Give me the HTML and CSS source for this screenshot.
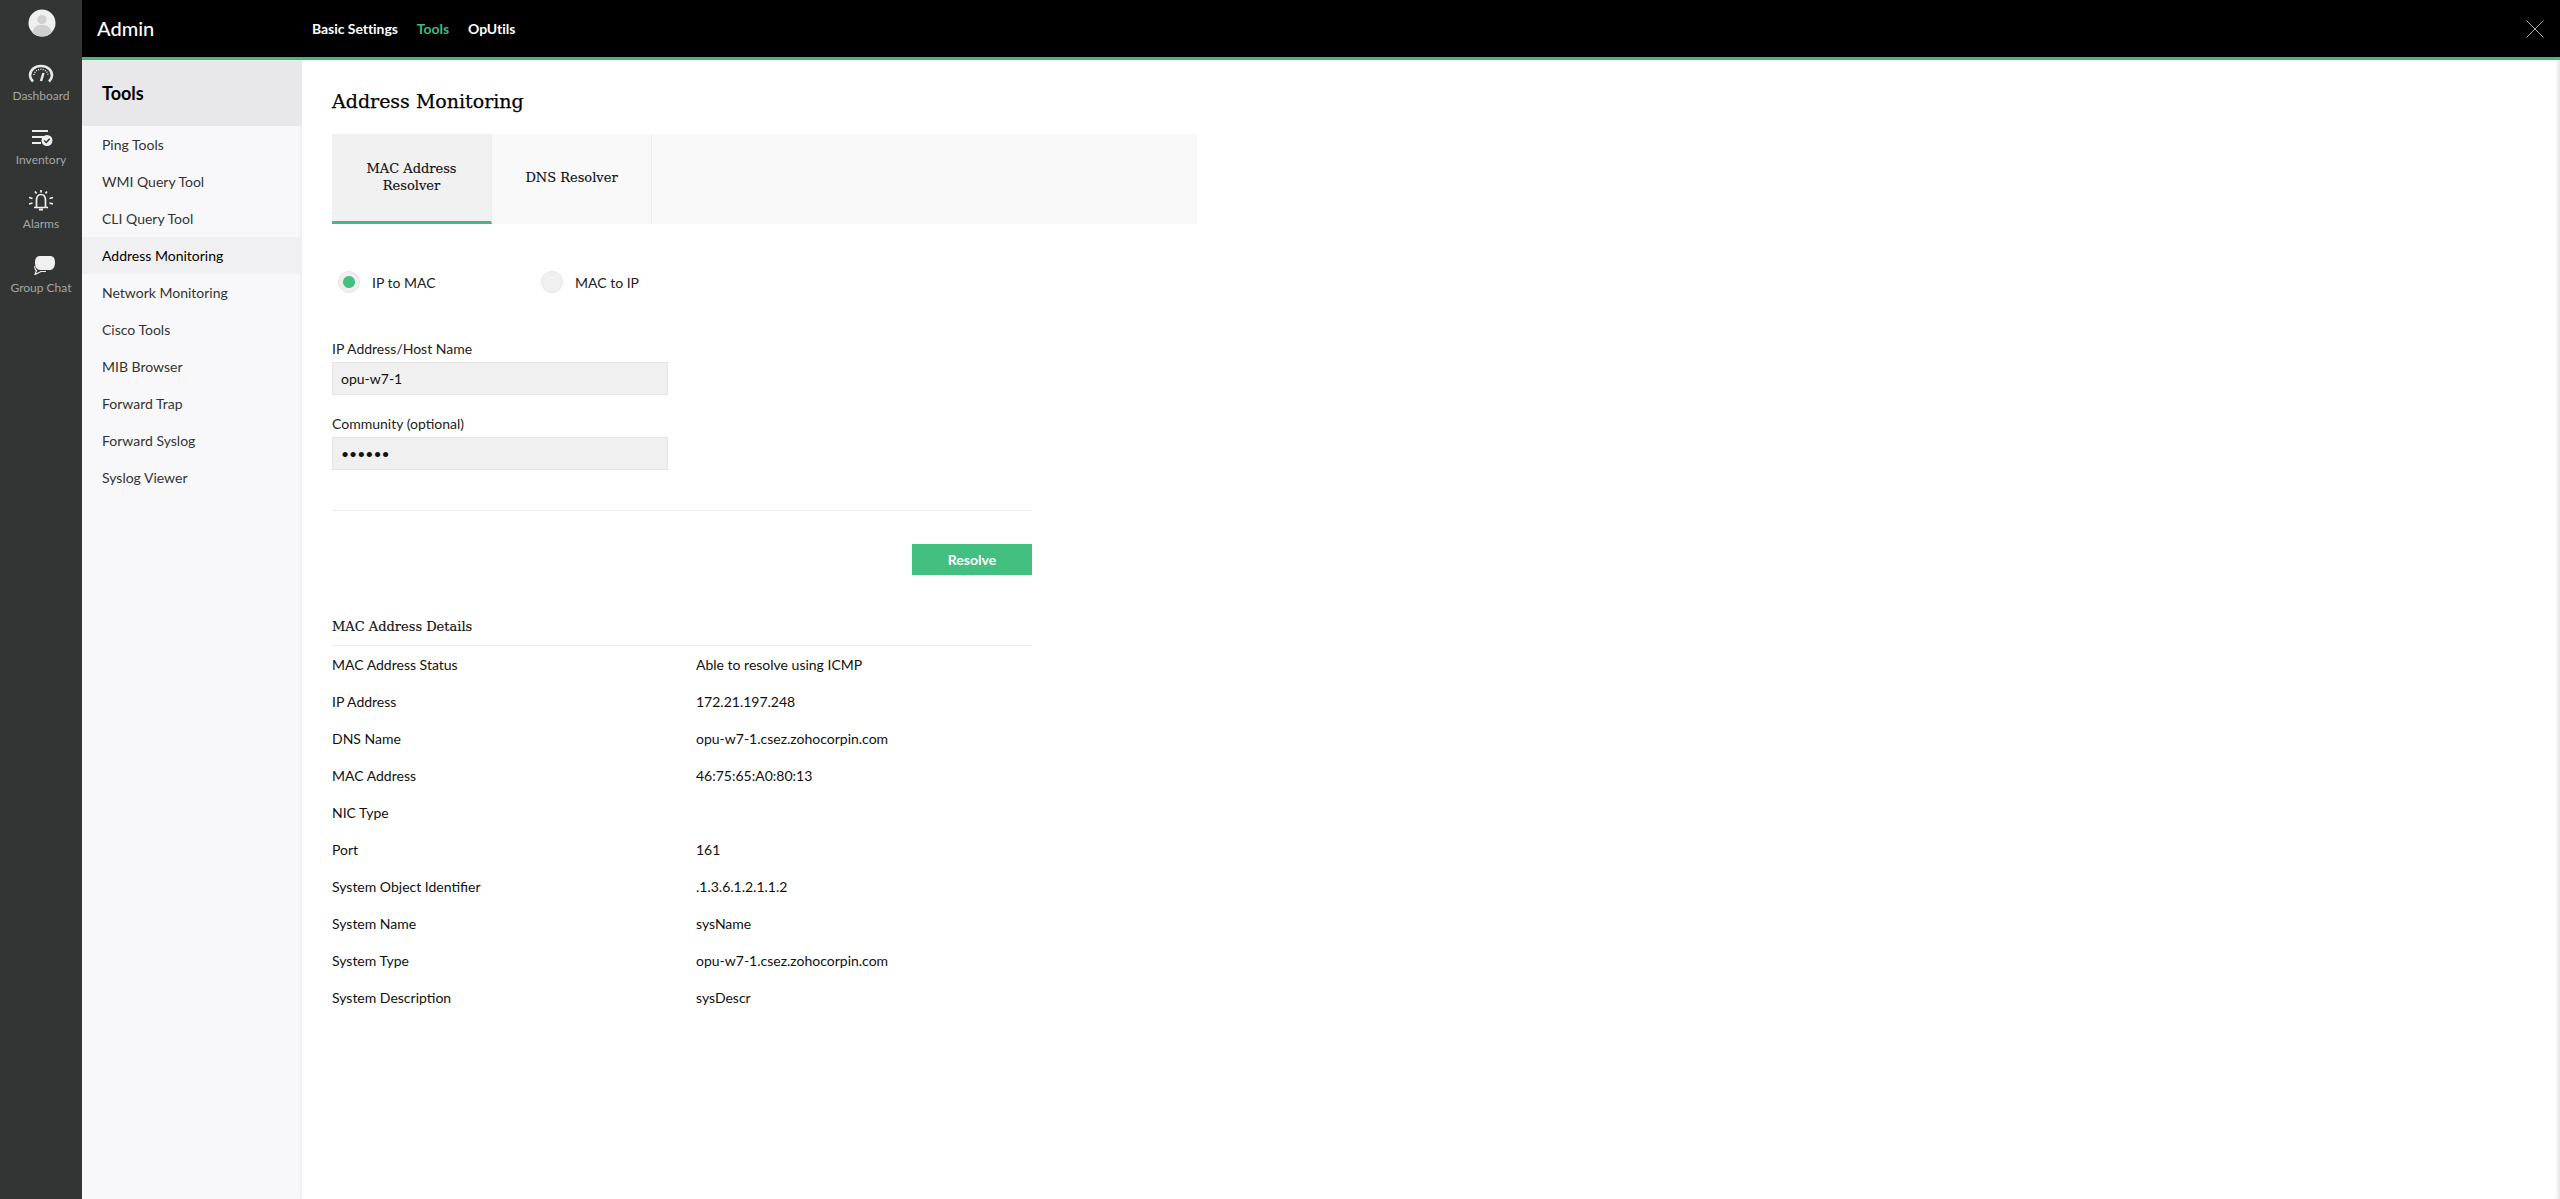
FILE: index.html
```html
<!DOCTYPE html>
<html lang="en">
<head>
<meta charset="utf-8">
<title>Address Monitoring</title>
<link rel="stylesheet" href="styles.css">
</head>
<body>
<div class="app">
  <nav class="rail">
    <div class="avatar">
      <svg viewBox="0 0 28 28" width="28" height="28"><circle cx="14" cy="14" r="13.5" fill="#efefef"/><circle cx="14" cy="10.5" r="4.6" fill="#cfcfcf"/><path d="M4.500 24c.6-5.500 4-8.200 9.500-8.200s8.900 2.700 9.500 8.200A13.500 13.500 0 0 1 14 27.500 13.500 13.500 0 0 1 4.500 24z" fill="#cfcfcf"/></svg>
    </div>
    <a class="rail-item rail-first">
      <svg class="rail-icon" viewBox="0 0 26 20" width="26" height="20" fill="none" stroke="#e9e9e9"><path d="M5 18.500C3 16.500 2 14.500 2 12.500 2 7 6.500 3 13 3S24 7 24 12.500c0 2-1 4-3 6" stroke-width="2.600"/><path d="M6 12C6.500 8.500 9.500 6.300 13 6.300S19.500 8.500 20 12" stroke-width="1.400" stroke-dasharray="1 1.300"/><path d="M15.500 10l-2.500 8" stroke-width="2.400"/></svg>
      <span>Dashboard</span>
    </a>
    <a class="rail-item">
      <svg class="rail-icon" viewBox="0 0 24 18" width="24" height="18"><path d="M3 2h16M3 8h13M3 14h9" stroke="#eee" stroke-width="2" fill="none"/><circle cx="18" cy="11.500" r="5.500" fill="#eee"/><path d="M15.300 11.500l2 2 3.400-3.800" stroke="#333" stroke-width="1.500" fill="none"/></svg>
      <span>Inventory</span>
    </a>
    <a class="rail-item">
      <svg class="rail-icon" viewBox="0 0 26 22" width="26" height="22" fill="none" stroke="#f0f0f0" stroke-width="1.700"><path d="M8.500 18v-6.500c0-3.500 1.500-6 4.500-6s4.500 2.500 4.500 6V18M6 18.500h14"/><path d="M11 20.500h4" stroke-width="2"/><path d="M13 1v2.500M7 2.500l1.500 2M19 2.500l-1.500 2M1 8.500l3.500 1M25 8.500l-3.500 1M1 15l3.500-1M25 15l-3.500-1"/></svg>
      <span>Alarms</span>
    </a>
    <a class="rail-item">
      <svg class="rail-icon chat" viewBox="0 0 24 20" width="24" height="20"><path d="M8 1h10c3 0 5 2 5 6.500S21 15 18 15H8c-3 0-5-3-5-7.500S5 1 8 1z" fill="#f0f0f0"/><path d="M3 11c-.5 2 0 3.500 1.500 4.500L3 19.500 9 16.500h5" fill="none" stroke="#f0f0f0" stroke-width="1.200"/></svg>
      <span>Group Chat</span>
    </a>
  </nav>
  <div class="main">
    <header class="topbar">
      <div class="brand">Admin</div>
      <ul class="topnav">
        <li>Basic Settings</li>
        <li class="current">Tools</li>
        <li>OpUtils</li>
      </ul>
      <svg class="close" viewBox="0 0 18 18" width="18" height="18"><path d="M.5.500l17 17M17.500.500l-17 17" stroke="#a8a8a8" stroke-width="1" fill="none"/></svg>
    </header>
    <div class="body">
      <aside class="side">
        <h2 class="side-title">Tools</h2>
        <ul class="side-list">
          <li>Ping Tools</li>
          <li>WMI Query Tool</li>
          <li>CLI Query Tool</li>
          <li class="active">Address Monitoring</li>
          <li>Network Monitoring</li>
          <li>Cisco Tools</li>
          <li>MIB Browser</li>
          <li>Forward Trap</li>
          <li>Forward Syslog</li>
          <li>Syslog Viewer</li>
        </ul>
      </aside>
      <main class="content">
        <h1 class="title">Address Monitoring</h1>
        <div class="tabs">
          <div class="tab selected">MAC Address<br>Resolver</div>
          <div class="tab">DNS Resolver</div>
        </div>
        <div class="radios">
          <label class="radio"><input type="radio" name="mode" checked><span>IP to MAC</span></label>
          <label class="radio"><input type="radio" name="mode"><span>MAC to IP</span></label>
        </div>
        <form class="form">
          <label class="field-label" for="host">IP Address/Host Name</label>
          <input class="field" id="host" type="text" value="opu-w7-1">
          <label class="field-label" for="comm">Community (optional)</label>
          <input class="field" id="comm" type="password" value="public">
          <div class="actions"><button class="resolve" type="button">Resolve</button></div>
        </form>
        <section class="details">
          <h3 class="details-title">MAC Address Details</h3>
          <dl class="rows">
            <dt>MAC Address Status</dt><dd>Able to resolve using ICMP</dd>
            <dt>IP Address</dt><dd>172.21.197.248</dd>
            <dt>DNS Name</dt><dd>opu-w7-1.csez.zohocorpin.com</dd>
            <dt>MAC Address</dt><dd>46:75:65:A0:80:13</dd>
            <dt>NIC Type</dt><dd></dd>
            <dt>Port</dt><dd>161</dd>
            <dt>System Object Identifier</dt><dd>.1.3.6.1.2.1.1.2</dd>
            <dt>System Name</dt><dd>sysName</dd>
            <dt>System Type</dt><dd>opu-w7-1.csez.zohocorpin.com</dd>
            <dt>System Description</dt><dd>sysDescr</dd>
          </dl>
        </section>
      </main>
    </div>
  </div>
</div>
</body>
</html>
```
FILE: styles.css
```css
* { box-sizing: border-box; }
html, body { margin: 0; height: 100%; }
body { font-family: Lato, "Open Sans", sans-serif; font-size: 14px; color: #222; background: #fff; overflow: hidden; }
ul, dl, dd, h1, h2, h3 { margin: 0; padding: 0; }
ul { list-style: none; }

.app { display: flex; height: 1199px; }

.rail { width: 82px; flex: none; background: #333534; display: flex; flex-direction: column; align-items: center; }
.avatar { height: 28px; margin: 9px 0 0 2px; }
.avatar svg { display: block; }
.rail-item { height: 64px; width: 100%; display: flex; flex-direction: column; align-items: center; justify-content: flex-end; color: #a3a5a5; font-size: 12px; line-height: 16px; }
.rail-first { margin-top: 3px; }
.rail-item span { display: block; }
.rail-icon { display: block; margin-bottom: 5px; }
.rail-item .chat { margin-left: 6px; }

.main { flex: 1; min-width: 0; display: flex; flex-direction: column; }

.topbar { height: 60px; flex: none; background: #000; border-bottom: 3px solid #43b97f; display: flex; align-items: center; padding: 0 16px 0 15px; color: #fff; }
.brand { font-size: 20px; font-weight: 500; width: 215px; margin-top: -2px; }
.topnav { display: flex; gap: 19px; font-size: 14px; font-weight: 700; letter-spacing: -.05px; margin-top: -1px; }
.topnav .current { color: #43b97f; }
.close { margin-left: auto; }

.body { flex: 1; display: flex; min-height: 0; }

.side { width: 220px; flex: none; background: #f8f8fa; box-shadow: inset -4px 0 4px -3px rgba(0,0,0,.06); }
.side-title { height: 66px; background: #e8e8ea; font-size: 18px; font-weight: 700; color: #000; line-height: 66px; padding-left: 20px; }
.side-list li { height: 37px; line-height: 37px; padding-left: 20px; color: #333; }
.side-list .active { background: #f0f0f2; color: #000; }

.content { flex: 1; padding: 0 30px; box-shadow: inset -5px 0 4px -3px rgba(0,0,0,.12); }
.title { font-family: "DejaVu Serif", serif; font-size: 19px; font-weight: 500; color: #000; line-height: 26px; padding-top: 28px; height: 74px; -webkit-text-stroke: .25px #000; }
.tabs { width: 865px; height: 90px; background: #f9f9f9; display: flex; }
.tab { width: 160px; border-right: 1px solid #ececec; padding-bottom: 4px; display: flex; align-items: center; justify-content: center; text-align: center; font-family: "DejaVu Serif", serif; font-size: 13px; line-height: 17px; color: #111; -webkit-text-stroke: .15px #111; }
.tab.selected { background: #f1f1f1; border-bottom: 3px solid #43b97f; padding-bottom: 1px; }

.radios { display: flex; margin-top: 47px; padding-left: 6px; }
.radio { display: flex; align-items: center; width: 203px; height: 22px; gap: 12px; }
.radio input { appearance: none; margin: 0; width: 22px; height: 22px; border-radius: 50%; background: #f0f0f0; border: 1px solid #e4e4e4; }
.radio input:checked { background: radial-gradient(circle, #43bf80 0 5.500px, #f0f0f0 6.500px); }

.form { width: 700px; margin-top: 47px; }
.field-label { display: block; height: 17px; line-height: 17px; color: #222; }
.field { display: block; width: 336px; height: 33px; margin: 5px 0 0; padding: 0 8px; background: #f0f0f0; border: 1px solid #e4e4e4; font: 14px Lato, sans-serif; color: #111; outline: 0; }
.field + .field-label { margin-top: 20px; }
.actions { margin-top: 40px; border-top: 1px solid #eee; padding-top: 33px; display: flex; justify-content: flex-end; }
.resolve { width: 120px; height: 31px; background: #43bf80; border: 0; color: #fff; font: 700 14px Lato, sans-serif; padding: 0; }

.details { width: 700px; margin-top: 37px; }
.details-title { font-family: "DejaVu Serif", serif; font-size: 13px; font-weight: 500; color: #111; height: 34px; line-height: 30px; border-bottom: 1px solid #eee; -webkit-text-stroke: .15px #111; }
.rows { display: grid; grid-template-columns: 364px 1fr; grid-auto-rows: 37px; line-height: 37px; color: #111; }
```
